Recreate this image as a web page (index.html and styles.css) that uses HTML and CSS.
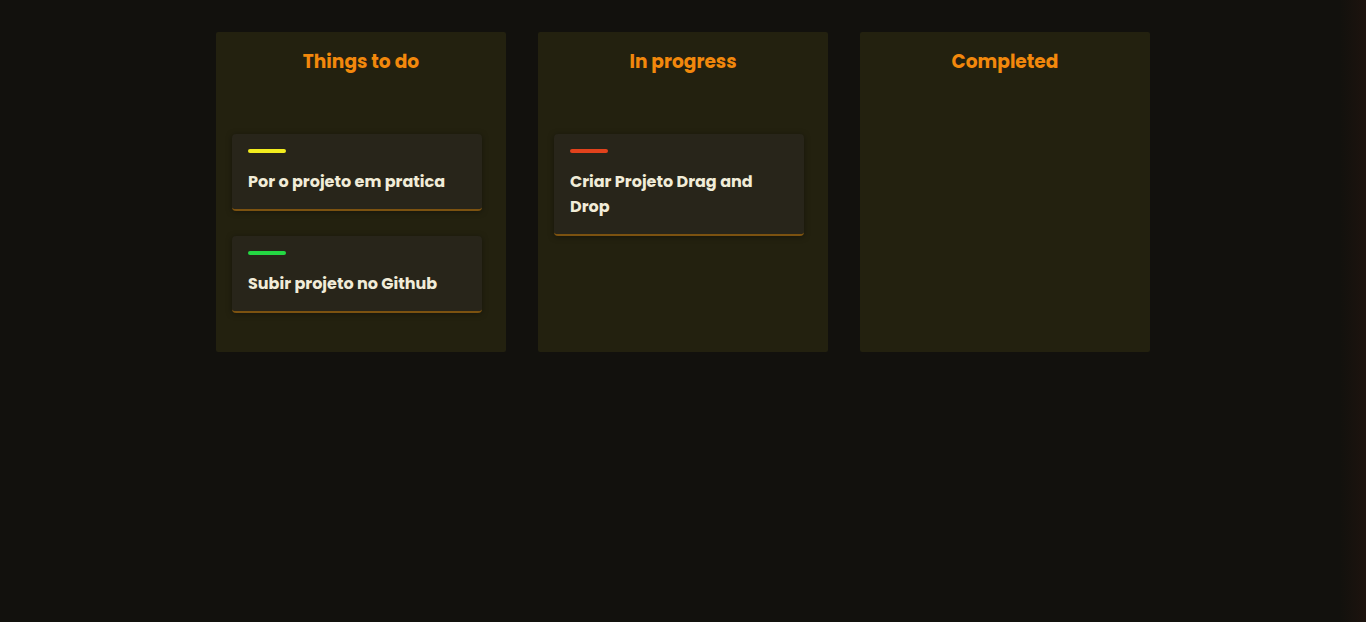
FILE: index.html
```html
<!DOCTYPE html>
<html lang="pt">
<head>
<meta charset="utf-8">
<title>Kanban</title>
<link rel="stylesheet" href="styles.css">
</head>
<body>
<main class="board">
  <section class="column">
    <h2 class="column-title">Things to do</h2>
    <div class="cards">
      <div class="card">
        <span class="tag tag-yellow"></span>
        <p class="card-text">Por o projeto em pratica</p>
      </div>
      <div class="card">
        <span class="tag tag-green"></span>
        <p class="card-text">Subir projeto no Github</p>
      </div>
    </div>
  </section>
  <section class="column">
    <h2 class="column-title">In progress</h2>
    <div class="cards">
      <div class="card">
        <span class="tag tag-red"></span>
        <p class="card-text">Criar Projeto Drag and Drop</p>
      </div>
    </div>
  </section>
  <section class="column">
    <h2 class="column-title">Completed</h2>
    <div class="cards"></div>
  </section>
</main>
</body>
</html>
```
FILE: styles.css
```css
* { box-sizing: border-box; }
html, body { height: 100%; }
body {
  margin: 0;
  background: linear-gradient(90deg, #12110d 0, #12110d 1340px, #1d130e 1366px);
  font-family: "Poppins", Inter, "Noto Sans", sans-serif;
}
.board {
  display: flex;
  justify-content: center;
  gap: 32px;
  padding-top: 32px;
}
.column {
  width: 290px;
  height: 320px;
  background: #23210f;
  border-radius: 2px;
  padding: 17px 16px;
}
.column-title {
  margin: 0;
  text-align: center;
  color: #f2880c;
  font-size: 18.6px;
  font-weight: 700;
  line-height: 26px;
}
.cards {
  margin-top: 59px;
  display: flex;
  flex-direction: column;
  gap: 25px;
}
.card {
  width: 250px;
  background: #28251a;
  border-radius: 4px;
  border-bottom: 2px solid #7c5210;
  padding: 15px 16px 15px;
  box-shadow: 0 1px 6px rgba(0, 0, 0, 0.35);
}
.tag {
  display: block;
  width: 38px;
  height: 4px;
  border-radius: 2px;
}
.tag-yellow { background: #f2ec1e; }
.tag-green { background: #24d843; }
.tag-red { background: #e2421c; }
.card-text {
  margin: 16px 0 0;
  color: #f1ecd8;
  font-size: 16px;
  font-weight: 700;
  line-height: 25px;
}
```
